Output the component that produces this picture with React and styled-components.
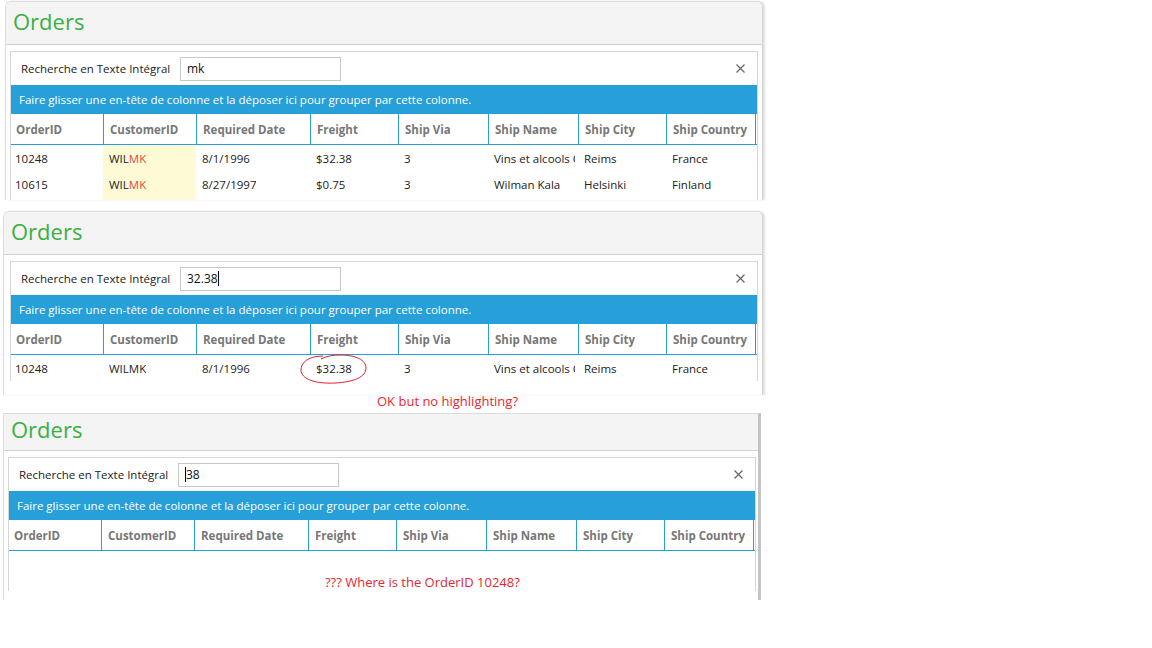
import React from 'react'
import styled, { createGlobalStyle } from 'styled-components'

const GlobalStyle = createGlobalStyle`
    body {
        margin: 0;
        background: #ffffff;
        font-family: "Open Sans", "Noto Sans", sans-serif;
    }
`

const columns = [
    { key: 'orderId', label: 'OrderID', w: 92 },
    { key: 'customerId', label: 'CustomerID', w: 93 },
    { key: 'required', label: 'Required Date', w: 114 },
    { key: 'freight', label: 'Freight', w: 88 },
    { key: 'shipVia', label: 'Ship Via', w: 90 },
    { key: 'shipName', label: 'Ship Name', w: 90 },
    { key: 'shipCity', label: 'Ship City', w: 88 },
    { key: 'shipCountry', label: 'Ship Country', w: 90 },
]

const template = columns.map(c => `${c.w}px`).join(' ')

const order10248 = {
    orderId: '10248', customerId: 'WILMK', required: '8/1/1996', freight: '$32.38',
    shipVia: '3', shipName: 'Vins et alcools Chevalier', shipCity: 'Reims', shipCountry: 'France',
}
const order10615 = {
    orderId: '10615', customerId: 'WILMK', required: '8/27/1997', freight: '$0.75',
    shipVia: '3', shipName: 'Wilman Kala', shipCity: 'Helsinki', shipCountry: 'Finland',
}

function CloseIcon() {
    return (
        <svg width="9" height="9" viewBox="0 0 9 9">
            <path d="M0.5 0.5 L8.5 8.5 M8.5 0.5 L0.5 8.5" stroke="#666" strokeWidth="1.2" />
        </svg>
    )
}

// hand drawn red ring from the annotated screenshot
function Circled() {
    return (
        <Ellipse width="70" height="32" viewBox="0 0 70 32">
            <path
                d="M24 3 C10 3 2 9 2 17 C2 26 16 31 36 30 C55 29 67 24 67 15 C67 7 57 2 41 2 C34 2 28 3 22 6"
                fill="none" stroke="#e0202a" strokeWidth="1"
            />
        </Ellipse>
    )
}

function CustomerCell({ value, mark }) {
    if (!mark) return value
    const i = value.toUpperCase().indexOf(mark.toUpperCase())
    return (
        <>
            {value.slice(0, i)}
            <Mark>{value.slice(i, i + mark.length)}</Mark>
            {value.slice(i + mark.length)}
        </>
    )
}

function Shot({ shot }) {
    return (
        <Frame $x={shot.x} $top={shot.top} $w={shot.width} $h={shot.height} $cropped={shot.cropped}>
            <Header $h={shot.headerH}>
                <Title $pad={shot.titlePad}>Orders</Title>
            </Header>
            <Body $padX={shot.padX}>
                <GridPanel>
                    <SearchRow>
                        <SearchLabel>Recherche en Texte Intégral</SearchLabel>
                        <SearchBox>
                            {shot.caretAt === 0 && <Caret />}
                            {shot.query}
                            {shot.caretAt === 'end' && <Caret />}
                        </SearchBox>
                        <CloseButton><CloseIcon /></CloseButton>
                    </SearchRow>
                    <GroupBar>Faire glisser une en-tête de colonne et la déposer ici pour grouper par cette colonne.</GroupBar>
                    <HeadRow>
                        {columns.map((c, i) => (
                            <HeadCell key={c.key} $first={i === 0} $last={i === columns.length - 1}>
                                {c.label}
                            </HeadCell>
                        ))}
                    </HeadRow>
                    <Rows>
                        {shot.rows.map(row => (
                            <Row key={row.orderId}>
                                {columns.map((c, i) => (
                                    <Cell key={c.key} $hl={shot.highlight === c.key} $first={i === 0}>
                                        <CellText>
                                            {c.key === 'customerId'
                                                ? <CustomerCell value={row[c.key]} mark={shot.mark} />
                                                : row[c.key]}
                                        </CellText>
                                        {shot.circle === c.key && <Circled />}
                                    </Cell>
                                ))}
                            </Row>
                        ))}
                        {shot.highlight && (
                            <Row>
                                {columns.map((c, i) => <Cell key={c.key} $hl={shot.highlight === c.key} $first={i === 0} />)}
                            </Row>
                        )}
                        {shot.note && <EmptyNote>{shot.note}</EmptyNote>}
                    </Rows>
                </GridPanel>
            </Body>
        </Frame>
    )
}

const shots = [
    {
        id: 1, x: 5, top: 1, width: 758, height: 199, headerH: 42, titlePad: 4, padX: 4,
        query: 'mk', rows: [order10248, order10615], highlight: 'customerId', mark: 'MK',
    },
    {
        id: 2, x: 3, top: 11, width: 760, height: 184, headerH: 42, titlePad: 4, padX: 6,
        query: '32.38', caretAt: 'end', rows: [order10248], circle: 'freight',
    },
    {
        id: 3, x: 3, top: 0, width: 758, height: 187, headerH: 36, titlePad: 0, padX: 4, cropped: true,
        query: '38', caretAt: 0, rows: [], note: '??? Where is the OrderID 10248?',
    },
]

export default function App() {
    return (
        <>
            <GlobalStyle />
            <Page>
                <Shot shot={shots[0]} />
                <Shot shot={shots[1]} />
                <Annotation>OK but no highlighting?</Annotation>
                <Shot shot={shots[2]} />
            </Page>
        </>
    )
}

const Page = styled.div`
    display: flex;
    flex-direction: column;
    width: 1152px;
    height: 648px;
    background: #fff;
`

const Frame = styled.section`
    box-sizing: border-box;
    margin-left: ${p => p.$x}px;
    margin-top: ${p => p.$top}px;
    width: ${p => p.$w}px;
    height: ${p => p.$h}px;
    overflow: hidden;
    background: #fff;
    border: 1px solid #dcdcdc;
    border-bottom: none;
    border-right: ${p => p.$cropped ? '3px solid #c4c4c4' : '1px solid #d4d4d4'};
    border-radius: ${p => p.$cropped ? '0' : '6px 6px 0 0'};
    box-shadow: ${p => p.$cropped ? 'none' : '2px 0 2px rgba(0, 0, 0, 0.12)'};
    display: flex;
    flex-direction: column;
    flex-shrink: 0;
`

const Header = styled.header`
    height: ${p => p.$h}px;
    flex-shrink: 0;
    background: #f4f4f4;
    border-bottom: 1px solid #cfd3d3;
`

const Title = styled.h1`
    margin: 0;
    padding: ${p => p.$pad}px 0 0 7px;
    font-family: "Open Sans", "Noto Sans", sans-serif;
    font-weight: 400;
    font-size: 22px;
    line-height: 30px;
    color: #3bb03f;
`

const Body = styled.div`
    padding: 6px ${p => p.$padX}px 0 ${p => p.$padX}px;
`

const GridPanel = styled.div`
    width: 748px;
    box-sizing: border-box;
    border: 1px solid #d6d6d6;
    border-bottom: none;
    font-size: 11.5px;
    color: #222;
`

const SearchRow = styled.div`
    height: 33px;
    display: flex;
    align-items: center;
    padding: 0 12px 0 10px;
`

const SearchLabel = styled.span`
    width: 159px;
    color: #222;
`

const SearchBox = styled.div`
    box-sizing: border-box;
    width: 161px;
    height: 24px;
    border: 1px solid #c8c8c8;
    padding: 0 6px;
    display: flex;
    align-items: center;
    font-size: 12px;
    color: #111;
`

const Caret = styled.span`
    display: inline-block;
    width: 1px;
    height: 15px;
    background: #000;
`

const CloseButton = styled.span`
    margin-left: auto;
    display: flex;
    align-items: center;
`

const GroupBar = styled.div`
    height: 29px;
    display: flex;
    align-items: center;
    padding-left: 8px;
    background: #279fd9;
    color: #fff;
`

const HeadRow = styled.div`
    display: grid;
    grid-template-columns: ${template};
    height: 31px;
    box-sizing: border-box;
    border-bottom: 1px solid #279fd9;
`

const HeadCell = styled.div`
    display: flex;
    align-items: center;
    padding-left: ${p => p.$first ? 5 : 6}px;
    border-left: ${p => p.$first ? 'none' : '1px solid #279fd9'};
    border-right: ${p => p.$last ? '1px solid #279fd9' : 'none'};
    font-weight: 700;
    color: #777;
    white-space: nowrap;
`

const Rows = styled.div`
    display: flex;
    flex-direction: column;
`

const Row = styled.div`
    display: grid;
    grid-template-columns: ${template};
    height: 26px;
`

const Cell = styled.div`
    position: relative;
    display: flex;
    align-items: center;
    min-width: 0;
    padding: 0 3px 0 ${p => p.$first ? 4 : 6}px;
    background: ${p => p.$hl ? '#fefad6' : 'transparent'};
`

const CellText = styled.span`
    display: block;
    min-width: 0;
    overflow: hidden;
    white-space: nowrap;
`

const Mark = styled.span`
    color: #e8473b;
`

const Ellipse = styled.svg`
    position: absolute;
    left: -11px;
    top: -2px;
`

const EmptyNote = styled.div`
    padding: 22px 0 0 316px;
    color: #e8262e;
    font-size: 13px;
`

const Annotation = styled.div`
    height: 18px;
    padding-left: 377px;
    color: #e8262e;
    font-size: 13px;
    line-height: 12px;
`
